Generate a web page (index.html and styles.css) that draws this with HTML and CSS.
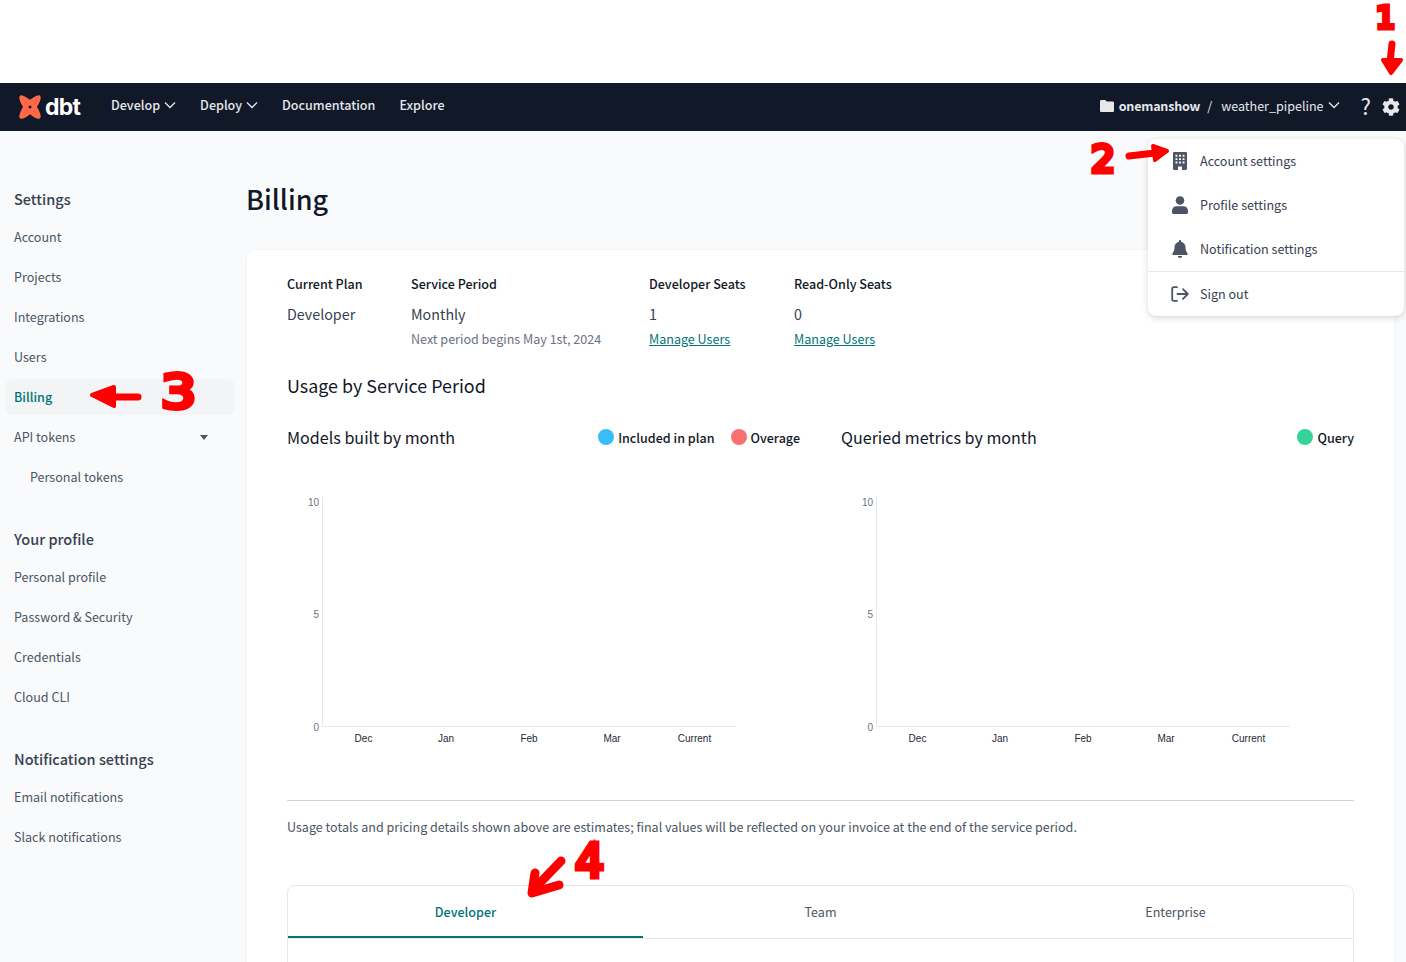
FILE: index.html
```html
<!DOCTYPE html>
<html lang="en">
<head>
    <meta charset="UTF-8">
    <meta name="viewport" content="width=device-width, initial-scale=1.0">
    <title>Billing</title>
    <link rel="stylesheet" href="styles.css">
</head>
<body>
    <div class="top-gap"></div>

    <nav class="navbar">
        <a class="logo" href="#">
            <svg class="logo-mark" viewBox="0 0 24 24" width="24" height="24">
                <path fill="#ff694a" d="M2.200.4C4.600-.6 8.400 2 12 4.800 15.600 2 19.400-.6 21.800.4c2.400 2.200-.4 7.400-2.800 11.600 2.400 4.200 5.200 9.400 2.800 11.600-2.400 1-6.200-1.600-9.800-4.400-3.600 2.800-7.400 5.400-9.800 4.400C-.2 21.400 2.600 16.200 5 12 2.600 7.800-.2 2.600 2.200.4Z"/>
                <circle cx="12" cy="12" r="1.500" fill="#111827"/>
            </svg>
            <span class="logo-text">dbt</span>
        </a>
        <a class="nav-link" href="#">Develop
            <svg class="chevron" viewBox="0 0 12 8" width="12" height="8"><path d="M1 1.500l5 5 5-5"/></svg>
        </a>
        <a class="nav-link" href="#">Deploy
            <svg class="chevron" viewBox="0 0 12 8" width="12" height="8"><path d="M1 1.500l5 5 5-5"/></svg>
        </a>
        <a class="nav-link" href="#">Documentation</a>
        <a class="nav-link" href="#">Explore</a>

        <div class="nav-right">
            <svg class="folder" viewBox="0 0 14 12" width="14" height="12"><path d="M1.300 0h3.900l1.600 1.600h5.900c.7 0 1.300.6 1.300 1.300v7.800c0 .7-.6 1.300-1.300 1.300H1.300C.6 12 0 11.400 0 10.700V1.300C0 .6.600 0 1.300 0Z"/></svg>
            <span class="account-name">onemanshow</span>
            <span class="slash">/</span>
            <span class="project-name">weather_pipeline</span>
            <svg class="chevron" viewBox="0 0 12 8" width="12" height="8"><path d="M1 1.500l5 5 5-5"/></svg>
            <span class="help">?</span>
            <svg class="gear" viewBox="0 0 512 512" width="18" height="18"><path d="M487.400 315.700l-42.600-24.600c4.300-23.200 4.300-47 0-70.200l42.600-24.600c4.900-2.800 7.100-8.600 5.500-14-11.100-35.600-30-67.800-54.700-94.600-3.800-4.100-10-5.100-14.800-2.300L380.800 110c-17.900-15.400-38.500-27.300-60.800-35.100V25.800c0-5.600-3.900-10.500-9.400-11.700-36.700-8.200-74.300-7.800-109.200 0-5.500 1.200-9.400 6.100-9.400 11.700V75c-22.200 7.900-42.800 19.800-60.800 35.100L88.700 85.500c-4.900-2.800-11-1.900-14.800 2.300-24.700 26.700-43.600 58.900-54.700 94.600-1.700 5.400.6 11.200 5.500 14L67.300 221c-4.300 23.200-4.300 47 0 70.200l-42.600 24.600c-4.900 2.800-7.100 8.600-5.500 14 11.100 35.600 30 67.800 54.700 94.600 3.800 4.100 10 5.100 14.800 2.300l42.600-24.600c17.900 15.400 38.500 27.300 60.800 35.100v49.200c0 5.600 3.900 10.500 9.400 11.700 36.700 8.200 74.300 7.800 109.200 0 5.500-1.200 9.400-6.100 9.400-11.700v-49.200c22.200-7.900 42.800-19.800 60.800-35.100l42.600 24.600c4.900 2.800 11 1.900 14.800-2.300 24.700-26.700 43.600-58.900 54.700-94.600 1.500-5.500-.7-11.300-5.600-14.100zM256 336c-44.100 0-80-35.900-80-80s35.900-80 80-80 80 35.900 80 80-35.900 80-80 80z"/></svg>
        </div>
    </nav>

    <div class="layout">
        <aside class="sidebar">
            <h3 class="side-title">Settings</h3>
            <a class="side-link" href="#">Account</a>
            <a class="side-link" href="#">Projects</a>
            <a class="side-link" href="#">Integrations</a>
            <a class="side-link" href="#">Users</a>
            <a class="side-link active" href="#">Billing</a>
            <a class="side-link" href="#">API tokens <span class="caret"></span></a>
            <a class="side-link sub" href="#">Personal tokens</a>

            <h3 class="side-title">Your profile</h3>
            <a class="side-link" href="#">Personal profile</a>
            <a class="side-link" href="#">Password &amp; Security</a>
            <a class="side-link" href="#">Credentials</a>
            <a class="side-link" href="#">Cloud CLI</a>

            <h3 class="side-title">Notification settings</h3>
            <a class="side-link" href="#">Email notifications</a>
            <a class="side-link" href="#">Slack notifications</a>
        </aside>

        <main class="content">
            <h1 class="page-title">Billing</h1>

            <section class="card">
                <div class="plan-grid">
                    <div>
                        <div class="plan-label">Current Plan</div>
                        <div class="plan-value">Developer</div>
                    </div>
                    <div>
                        <div class="plan-label">Service Period</div>
                        <div class="plan-value">Monthly</div>
                        <div class="plan-note">Next period begins May 1st, 2024</div>
                    </div>
                    <div>
                        <div class="plan-label">Developer Seats</div>
                        <div class="plan-value">1</div>
                        <a class="plan-note manage" href="#">Manage Users</a>
                    </div>
                    <div>
                        <div class="plan-label">Read-Only Seats</div>
                        <div class="plan-value">0</div>
                        <a class="plan-note manage" href="#">Manage Users</a>
                    </div>
                </div>

                <h2 class="usage-title">Usage by Service Period</h2>

                <div class="charts">
                    <div class="chart">
                        <div class="chart-head">
                            <span class="chart-title">Models built by month</span>
                            <div class="legend">
                                <span class="dot blue"></span><span class="legend-text">Included in plan</span>
                                <span class="dot red"></span><span class="legend-text">Overage</span>
                            </div>
                        </div>
                        <svg class="plot" viewBox="0 0 514 320" width="514" height="320">
                            <path class="axis" d="M35.500 47V276.500H449"/>
                            <text class="y-tick" x="32" y="55.500">10</text>
                            <text class="y-tick" x="32" y="167.500">5</text>
                            <text class="y-tick" x="32" y="280.500">0</text>
                            <text class="x-tick" x="76.500" y="292">Dec</text>
                            <text class="x-tick" x="159" y="292">Jan</text>
                            <text class="x-tick" x="242" y="292">Feb</text>
                            <text class="x-tick" x="325" y="292">Mar</text>
                            <text class="x-tick" x="407.500" y="292">Current</text>
                        </svg>
                    </div>
                    <div class="chart">
                        <div class="chart-head">
                            <span class="chart-title">Queried metrics by month</span>
                            <div class="legend">
                                <span class="dot green"></span><span class="legend-text">Query</span>
                            </div>
                        </div>
                        <svg class="plot" viewBox="0 0 514 320" width="514" height="320">
                            <path class="axis" d="M35.500 47V276.500H449"/>
                            <text class="y-tick" x="32" y="55.500">10</text>
                            <text class="y-tick" x="32" y="167.500">5</text>
                            <text class="y-tick" x="32" y="280.500">0</text>
                            <text class="x-tick" x="76.500" y="292">Dec</text>
                            <text class="x-tick" x="159" y="292">Jan</text>
                            <text class="x-tick" x="242" y="292">Feb</text>
                            <text class="x-tick" x="325" y="292">Mar</text>
                            <text class="x-tick" x="407.500" y="292">Current</text>
                        </svg>
                    </div>
                </div>

                <p class="usage-note">Usage totals and pricing details shown above are estimates; final values will be reflected on your invoice at the end of the service period.</p>

                <div class="plans">
                    <div class="tabs">
                        <a class="tab active" href="#">Developer</a>
                        <a class="tab" href="#">Team</a>
                        <a class="tab" href="#">Enterprise</a>
                    </div>
                    <div class="plans-body"></div>
                </div>
            </section>
        </main>
    </div>

    <div class="menu">
        <a class="menu-item" href="#">
            <svg class="menu-icon" viewBox="0 0 16 18" width="16" height="18"><path fill-rule="evenodd" d="M2.200 0h11.600c.7 0 1.200.5 1.200 1.200v15.600c0 .7-.5 1.200-1.200 1.200H10v-3.400H6V18H2.200C1.500 18 1 17.500 1 16.800V1.200C1 .5 1.500 0 2.200 0ZM3.500 2.800v1.900h1.900V2.800ZM7.050 2.800v1.900h1.900V2.800ZM10.600 2.800v1.900h1.900V2.800ZM3.500 6.200v1.900h1.900V6.200ZM7.050 6.200v1.900h1.900V6.200ZM10.600 6.200v1.900h1.900V6.200ZM3.500 9.600v1.900h1.900V9.600ZM7.050 9.600v1.900h1.900V9.600ZM10.600 9.600v1.900h1.900V9.600Z"/></svg>
            Account settings
        </a>
        <a class="menu-item" href="#">
            <svg class="menu-icon" viewBox="0 0 16 18" width="16" height="18"><circle cx="8" cy="4.500" r="4.300"/><path d="M4.500 10.300h7c2.500 0 4.500 2 4.500 4.500v1.700c0 .8-.7 1.500-1.500 1.500h-13C.7 18 0 17.300 0 16.500v-1.700c0-2.500 2-4.500 4.500-4.500Z"/></svg>
            Profile settings
        </a>
        <a class="menu-item" href="#">
            <svg class="menu-icon" viewBox="0 0 16 18" width="16" height="18"><path d="M8 0c.6 0 1.100.5 1.100 1.100v.7c2.600.5 4.400 2.700 4.400 5.400 0 3.400.9 4.800 2 6 .5.600.2 1.800-.8 1.800H1.300c-1 0-1.300-1.200-.8-1.800 1.100-1.200 2-2.600 2-6 0-2.700 1.800-4.900 4.400-5.400v-.7C6.900.5 7.400 0 8 0Z"/><path d="M5.800 16h4.400c0 1.200-1 2-2.200 2s-2.200-.8-2.200-2Z"/></svg>
            Notification settings
        </a>
        <div class="menu-line"></div>
        <a class="menu-item" href="#">
            <svg class="menu-icon stroke" viewBox="0 0 18 16" width="18" height="16"><path d="M6 1.200H3C2 1.200 1.200 2 1.200 3v10c0 1 .8 1.800 1.800 1.800h3"/><path d="M6.500 8h10M12 3.200 16.800 8 12 12.800"/></svg>
            Sign out
        </a>
    </div>

    <!-- red notes drawn over the screenshot -->
    <div class="note note-1">1</div>
    <div class="note note-2">2</div>
    <div class="note note-3">3</div>
    <div class="note note-4">4</div>
    <svg class="arrows" viewBox="0 0 1406 962" width="1406" height="962">
        <path class="arrow-line" d="M1392 44 1390 62"/>
        <path class="arrow-head" d="M1383 60H1401L1391 73Z"/>
        <path class="arrow-line" d="M1129 156 1155 153"/>
        <path class="arrow-head" d="M1153 146 1167 151 1155 160Z"/>
        <path class="arrow-line" d="M138 397H105"/>
        <path class="arrow-head" d="M114 387 92 395 114 406Z"/>
        <path class="arrow-line thick" d="M561 861 536 887"/>
        <path class="arrow-line thick" d="M535 873 532 893 559 885"/>
    </svg>
</body>
</html>
```

FILE: styles.css
```css
* {
    box-sizing: border-box;
}
html, body {
    height: 100%;
}
body {
    margin: 0;
    overflow: hidden;
    background-color: white;
    color: #111827;
    font-family: "Noto Sans CJK SC", "Open Sans", sans-serif;
    font-size: 12.55px;
    position: relative;
}
a {
    text-decoration: none;
    color: inherit;
}

.top-gap {
    height: 83px;
}

/* navbar */
.navbar {
    height: 48px;
    padding-left: 18px;
    padding-right: 6px;
    display: flex;
    align-items: center;
    background-color: #111827;
    color: #e5e7eb;
}
.logo {
    display: flex;
    align-items: center;
    width: 93px;
    gap: 3px;
}
.logo-text {
    font-family: Inter, sans-serif;
    font-weight: 700;
    font-size: 23px;
    line-height: 24px;
    letter-spacing: -0.8px;
    color: white;
}
.nav-link {
    display: flex;
    align-items: center;
    gap: 4px;
    margin-right: 24px;
    font-weight: 500;
    line-height: 20px;
    margin-bottom: 4px;
}
.chevron {
    fill: none;
    stroke: currentColor;
    stroke-width: 1.300;
}
.nav-right {
    margin-left: auto;
    margin-bottom: 4px;
    display: flex;
    align-items: center;
}
.folder {
    fill: #e5e7eb;
    margin-right: 5px;
    margin-top: 2px;
}
.account-name {
    font-weight: 700;
    letter-spacing: -0.2px;
}
.slash {
    margin: 0 9px 0 7px;
}
.project-name {
    margin-right: 4px;
}
.help {
    margin-left: 21px;
    margin-right: 11px;
    font-size: 22px;
    line-height: 24px;
}
.gear {
    fill: #e5e7eb;
    margin-top: 4px;
}

/* sidebar and page */
.layout {
    display: flex;
    height: 831px;
    background-color: #f9fafb;
}
.sidebar {
    width: 247px;
    flex-shrink: 0;
    padding: 50px 13px 0 6px;
    display: flex;
    flex-direction: column;
}
.side-title {
    margin: 0 0 0 8px;
    height: 36px;
    line-height: 36px;
    font-size: 14.5px;
    font-weight: 500;
    color: #374151;
}
.side-link + .side-title {
    margin-top: 24px;
}
.side-link {
    display: flex;
    align-items: center;
    justify-content: space-between;
    flex-shrink: 0;
    height: 36px;
    margin: 2px 0;
    padding: 0 8px 2px;
    border-radius: 6px;
    color: #4b5563;
}
.side-link.active {
    background-color: #f3f4f6;
    color: #047377;
    font-weight: 500;
}
.side-link.sub {
    padding-left: 24px;
}
.caret {
    margin-top: 2px;
    margin-right: 18px;
    border-left: 4.500px solid transparent;
    border-right: 4.500px solid transparent;
    border-top: 5px solid #4b5563;
}
.content {
    flex: 1;
    padding: 48px 12px 0 0;
    min-width: 0;
}
.page-title {
    margin: 0 0 31px -1px;
    font-size: 27px;
    line-height: 40px;
    font-weight: 500;
}
.card {
    height: 800px;
    padding: 24px 40px;
    background-color: white;
    border-radius: 8px;
    box-shadow: 0 0 2px rgba(0, 0, 0, 0.08);
}

/* plan summary */
.plan-grid {
    display: grid;
    grid-template-columns: 124px 238px 145px auto;
}
.plan-label {
    line-height: 20px;
    font-weight: 500;
}
.plan-value {
    margin-top: 10px;
    line-height: 20px;
    font-size: 14.3px;
    color: #374151;
}
.plan-note {
    display: block;
    margin-top: 5px;
    line-height: 20px;
    color: #6b7280;
}
.manage {
    color: #047377;
    text-decoration: underline;
}
.usage-title {
    margin: 22px 0 0;
    font-size: 17.9px;
    line-height: 28px;
    font-weight: 400;
}

/* charts */
.charts {
    display: flex;
    gap: 40px;
    margin-top: 26px;
}
.chart {
    width: 514px;
}
.chart-head {
    display: flex;
    align-items: center;
    justify-content: space-between;
    height: 24px;
}
.chart-title {
    font-size: 16.1px;
    line-height: 24px;
}
.legend {
    display: flex;
    align-items: center;
    padding-right: 1px;
    font-weight: 500;
}
.dot {
    width: 16px;
    height: 16px;
    border-radius: 50%;
    margin-right: 4px;
}
.legend-text + .dot {
    margin-left: 16px;
}
.blue {
    background-color: #38bdf8;
}
.red {
    background-color: #f87171;
}
.green {
    background-color: #34d399;
}
.plot {
    display: block;
    margin-top: 1px;
}
.axis {
    fill: none;
    stroke: #e5e7eb;
}
.y-tick, .x-tick {
    font-family: "Liberation Sans", Arial, sans-serif;
    font-size: 10px;
}
.y-tick {
    fill: #6b7280;
    text-anchor: end;
}
.x-tick {
    fill: #1f2937;
    text-anchor: middle;
}
.usage-note {
    margin: 30px 0 0;
    padding-top: 16px;
    border-top: 1px solid #d1d5db;
    line-height: 20px;
    color: #4b5563;
}

/* plan tabs */
.plans {
    margin-top: 48px;
    border: 1px solid #e5e7eb;
    border-radius: 8px;
}
.tabs {
    display: flex;
    border-bottom: 1px solid #e5e7eb;
}
.tab {
    flex: 1;
    height: 52px;
    line-height: 52px;
    text-align: center;
    color: #4b5563;
}
.tab.active {
    border-bottom: 2px solid #047377;
    color: #047377;
    font-weight: 500;
}
.plans-body {
    height: 200px;
}

/* settings menu */
.menu {
    position: absolute;
    top: 139px;
    left: 1148px;
    width: 256px;
    height: 177px;
    background-color: white;
    border-radius: 8px;
    box-shadow: 0 2px 6px rgba(0, 0, 0, 0.15), 0 0 1px rgba(0, 0, 0, 0.1);
}
.menu-item {
    display: flex;
    align-items: center;
    height: 44px;
    padding-left: 24px;
    padding-bottom: 2px;
    color: #374151;
}
.menu-icon {
    width: 16px;
    margin-top: 2px;
    margin-right: 12px;
    fill: #4b5563;
}
.menu-icon.stroke {
    width: 18px;
    margin-left: -1px;
    margin-right: 11px;
    fill: none;
    stroke: #4b5563;
    stroke-width: 1.800;
    stroke-linecap: round;
    stroke-linejoin: round;
}
.menu-line {
    height: 1px;
    background-color: #e5e7eb;
}

/* hand drawn notes */
.note {
    position: absolute;
    font-family: "DejaVu Sans", sans-serif;
    color: #ff0000;
    -webkit-text-stroke: 5px #ff0000;
    line-height: 1.2;
}
.note-1 {
    top: 0;
    left: 1376px;
    font-size: 30px;
}
.note-2 {
    top: 137px;
    left: 1091px;
    font-size: 38px;
}
.note-3 {
    top: 365px;
    left: 161px;
    font-size: 46px;
    transform: scaleX(1.2);
    transform-origin: left;
}
.note-4 {
    top: 834px;
    left: 575px;
    font-size: 46px;
}
.arrows {
    position: absolute;
    top: 0;
    left: 0;
    pointer-events: none;
}
.arrow-line {
    fill: none;
    stroke: #ff0000;
    stroke-width: 7;
    stroke-linecap: round;
    stroke-linejoin: round;
}
.arrow-line.thick {
    stroke-width: 9;
}
.arrow-head {
    fill: #ff0000;
    stroke: #ff0000;
    stroke-width: 4;
    stroke-linejoin: round;
}
```
